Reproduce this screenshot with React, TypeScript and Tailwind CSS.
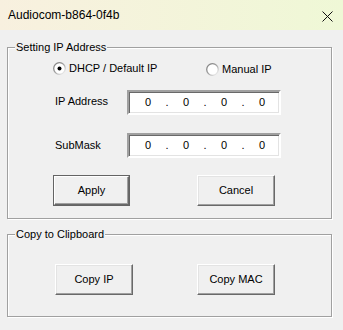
import React from "react";

const btnBase =
  "h-[31px] bg-[#f0f0f0] text-[11px] text-black flex items-center justify-center border border-t-white border-l-white border-b-[#696969] border-r-[#696969] shadow-[inset_-1px_-1px_0_#a0a0a0,inset_1px_1px_0_#e3e3e3]";

function Btn({ label, w, def }: { label: string; w: string; def?: boolean }) {
  if (def) {
    return (
      <div className={`${w} h-[31px] border border-[#646464] flex`}>
        <div className="flex-1 bg-[#f0f0f0] text-[11px] text-black flex items-center justify-center border border-t-white border-l-white border-b-[#696969] border-r-[#696969] shadow-[inset_-1px_-1px_0_#a0a0a0]">
          {label}
        </div>
      </div>
    );
  }
  return <div className={`${w} ${btnBase}`}>{label}</div>;
}

function IpBox() {
  return (
    <div className="w-[154px] h-[25px] bg-white border-2 border-t-[#a0a0a0] border-l-[#a0a0a0] border-b-white border-r-white shadow-[inset_1px_1px_0_#696969,inset_-1px_-1px_0_#e3e3e3] flex items-center pl-[2px] text-[11px] text-black">
      <span className="w-[34px] text-center">0</span>
      <span className="w-[4px] text-center">.</span>
      <span className="w-[34px] text-center">0</span>
      <span className="w-[4px] text-center">.</span>
      <span className="w-[34px] text-center">0</span>
      <span className="w-[4px] text-center">.</span>
      <span className="w-[34px] text-center">0</span>
    </div>
  );
}

function Radio({ checked }: { checked?: boolean }) {
  return (
    <svg width="13" height="13" viewBox="0 0 13 13">
      <defs>
        <linearGradient id={checked ? "ga" : "gb"} x1="0" y1="0" x2="1" y2="1">
          <stop offset="0" stopColor="#7a7a7a" />
          <stop offset="0.5" stopColor="#a0a0a0" />
          <stop offset="1" stopColor="#ffffff" />
        </linearGradient>
      </defs>
      <circle cx="6.5" cy="6.5" r="5.8" fill="#ffffff" stroke={`url(#${checked ? "ga" : "gb"})`} strokeWidth="1.3" />
      {checked && <circle cx="6.5" cy="6.5" r="2" fill="#000" />}
    </svg>
  );
}

export default function App() {
  return (
    <div
      className="w-[343px] h-[330px] bg-[#f0f0f0] overflow-hidden text-black"
      style={{ fontFamily: '"Liberation Sans", Arial, sans-serif' }}
    >
      <div className="h-[30px] flex items-center justify-between pl-[8px] pr-[10px] bg-gradient-to-r from-[#f8f0df] to-[#eff8d6]">
        <span className="text-[12px] leading-none">Audiocom-b864-0f4b</span>
        <svg width="11" height="11" viewBox="0 0 11 11" className="mt-[2px]">
          <path d="M0.5 0.5 L10.5 10.5 M10.5 0.5 L0.5 10.5" stroke="#111" strokeWidth="1" />
        </svg>
      </div>

      <div className="pl-[7px] pt-[17px]">
        <div className="relative w-[325px] h-[172px] border border-[#a0a0a0] shadow-[1px_1px_0_#fff,inset_1px_1px_0_#fff]">
          <span className="absolute left-[7px] -top-[7px] px-[1px] bg-[#f0f0f0] text-[11px] leading-[13px]">
            Setting IP Address
          </span>

          <div className="mt-[13px] ml-[45px] h-[14px] flex items-center text-[11px]">
            <div className="w-[153px] flex items-center gap-[3px]">
              <Radio checked />
              <span className="whitespace-pre">DHCP / Default IP</span>
            </div>
            <div className="flex items-center gap-[3px] mt-[2px]">
              <Radio />
              <span>Manual IP</span>
            </div>
          </div>

          <div className="mt-[15px] ml-[47px] flex items-center text-[11px]">
            <span className="w-[72px] -mt-[2px]">IP Address</span>
            <IpBox />
          </div>

          <div className="mt-[18px] ml-[47px] flex items-center text-[11px]">
            <span className="w-[72px]">SubMask</span>
            <IpBox />
          </div>

          <div className="mt-[17px] ml-[45px] flex gap-[67px]">
            <Btn label="Apply" w="w-[77px]" def />
            <Btn label="Cancel" w="w-[78px]" />
          </div>
        </div>

        <div className="relative mt-[15px] w-[325px] h-[83px] border border-[#a0a0a0] shadow-[1px_1px_0_#fff,inset_1px_1px_0_#fff]">
          <span className="absolute left-[7px] -top-[7px] px-[1px] bg-[#f0f0f0] text-[11px] leading-[13px]">
            Copy to Clipboard
          </span>
          <div className="mt-[29px] ml-[47px] flex gap-[64px]">
            <Btn label="Copy IP" w="w-[78px]" />
            <Btn label="Copy MAC" w="w-[78px]" />
          </div>
        </div>
      </div>
    </div>
  );
}
